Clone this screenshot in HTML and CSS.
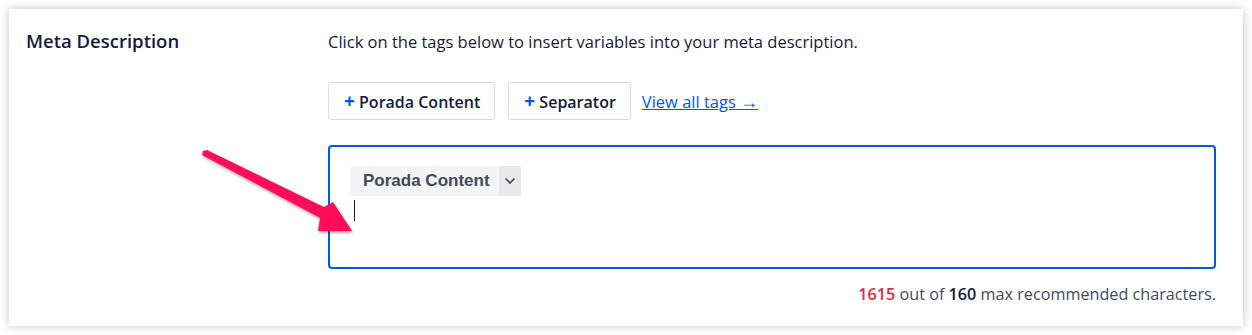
FILE: index.html
```html
<!DOCTYPE html>
<html lang="en">
<head>
    <meta charset="UTF-8">
    <meta name="viewport" content="width=device-width, initial-scale=1.0">
    <title>Meta Description</title>
    <link rel="stylesheet" href="styles.css">
</head>
<body>
    <div class="settings-card">
        <div class="setting-label">Meta Description</div>

        <div class="setting-body">
            <p class="setting-help">Click on the tags below to insert variables into your meta description.</p>

            <div class="tag-buttons">
                <button class="tag-btn"><span class="plus">+</span> Porada Content</button>
                <button class="tag-btn"><span class="plus">+</span> Separator</button>
                <a href="#" class="view-tags">View all tags <span class="arrow">&rarr;</span></a>
            </div>

            <div class="editor">
                <div class="tag-pill">
                    <span class="tag-name">Porada Content</span>
                    <span class="tag-toggle">
                        <svg width="12" height="8" viewBox="0 0 12 8"><path d="M1.5 1.5 L6 6 L10.5 1.5" fill="none" stroke="#434960" stroke-width="1.6"/></svg>
                    </span>
                </div>
                <div class="caret"></div>
            </div>

            <div class="char-count">
                <span class="over">1615</span> out of <strong>160</strong> max recommended characters.
            </div>
        </div>

        <svg class="pointer" width="1252" height="335" viewBox="0 0 1252 335">
            <defs>
                <filter id="arrowShadow" x="-20%" y="-20%" width="140%" height="140%">
                    <feDropShadow dx="1" dy="2" stdDeviation="1.5" flood-color="#000" flood-opacity="0.35"/>
                </filter>
            </defs>
            <polygon points="203,151 207,150 324,207 333,202 352,231 318,231 320,218 202,155" fill="#ff0f5a" filter="url(#arrowShadow)"/>
        </svg>
    </div>
</body>
</html>
```

FILE: styles.css
```css
* {
    margin: 0;
    padding: 0;
    box-sizing: border-box;
}
body {
    background-color: #fff;
    font-family: 'Open Sans', 'Noto Sans', sans-serif;
    color: #141b38;
    padding: 9px;
}
.settings-card {
    position: relative;
    display: flex;
    width: 1234px;
    height: 317px;
    background-color: #fff;
    box-shadow: 0 0 9px rgba(0, 0, 0, 0.24);
}
.setting-label {
    width: 319px;
    padding: 19px 0 0 17px;
    font-size: 18.5px;
    font-weight: 600;
    color: #141b38;
}
.setting-body {
    flex: 1;
    padding: 21px 0 0 0;
    width: 888px;
}
.setting-help {
    font-size: 16.5px;
    color: #141b38;
    line-height: 23px;
}
.tag-buttons {
    display: flex;
    align-items: center;
    gap: 13px;
    margin-top: 29px;
}
.tag-btn {
    height: 38px;
    padding: 0 14px 0 15px;
    background-color: #fff;
    border: 1px solid #ddd;
    border-radius: 3px;
    font-family: inherit;
    font-size: 16px;
    font-weight: 600;
    color: #141b38;
}
.plus {
    color: #005ae0;
    font-size: 19px;
    font-weight: 700;
}
.view-tags {
    margin-left: -2px;
    color: #005ae0;
    font-size: 16.5px;
}
.view-tags .arrow {
    font-size: 18px;
}
.editor {
    margin-top: 25px;
    width: 888px;
    height: 124px;
    border: 2px solid #005ae0;
    border-radius: 4px;
    padding: 19px 0 0 20px;
}
.tag-pill {
    display: inline-flex;
    height: 30px;
    background-color: #f3f4f5;
    border-radius: 3px;
    overflow: hidden;
}
.tag-name {
    display: flex;
    align-items: center;
    padding: 0 9px 0 13px;
    font-family: 'Liberation Sans', Arial, sans-serif;
    font-size: 17px;
    font-weight: 700;
    color: #434960;
}
.tag-toggle {
    display: flex;
    align-items: center;
    justify-content: center;
    width: 22px;
    background-color: #e8e8eb;
}
.caret {
    width: 1px;
    height: 21px;
    margin: 4px 0 0 4px;
    background-color: #141b38;
}
.char-count {
    margin-top: 14px;
    width: 888px;
    text-align: right;
    font-size: 16.2px;
    color: #434960;
}
.char-count .over {
    color: #df2a4a;
    font-weight: 600;
}
.char-count strong {
    font-weight: 600;
    color: #141b38;
}
.pointer {
    position: absolute;
    left: -9px;
    top: -9px;
    pointer-events: none;
}
```
